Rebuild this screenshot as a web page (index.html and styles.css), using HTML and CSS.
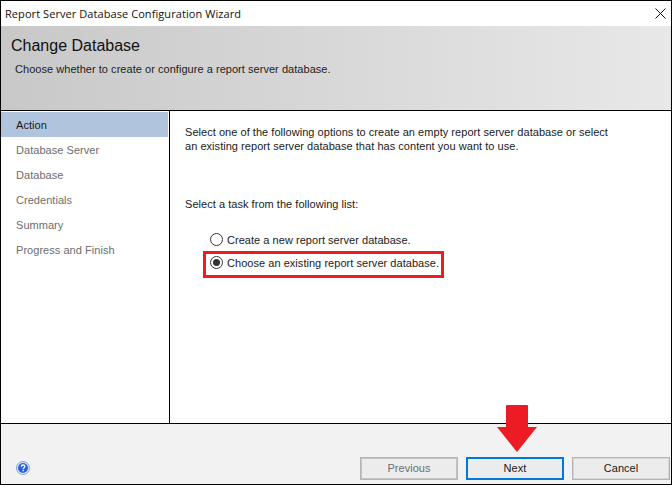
FILE: index.html
```html
<!DOCTYPE html>
<html lang="en">
<head>
<meta charset="utf-8">
<title>Report Server Database Configuration Wizard</title>
<link rel="stylesheet" href="styles.css">
</head>
<body>
<div class="window">
  <div class="titlebar">
    <span class="title">Report Server Database Configuration Wizard</span>
    <svg class="close" width="11" height="11" viewBox="0 0 11 11"><path d="M0.5 0.5L10.5 10.5M10.5 0.5L0.5 10.5" stroke="#111" stroke-width="1" fill="none"/></svg>
  </div>
  <header class="banner">
    <h1 class="banner-title">Change Database</h1>
    <p class="banner-sub">Choose whether to create or configure a report server database.</p>
  </header>
  <div class="middle">
    <nav class="steps">
      <div class="step active">Action</div>
      <div class="step">Database Server</div>
      <div class="step">Database</div>
      <div class="step">Credentials</div>
      <div class="step">Summary</div>
      <div class="step">Progress and Finish</div>
    </nav>
    <main class="content">
      <p class="intro">Select one of the following options to create an empty report server database or select<br>an existing report server database that has content you want to use.</p>
      <p class="prompt">Select a task from the following list:</p>
      <div class="options">
        <div class="option">
          <span class="radio"></span><span>Create a new report server database.</span>
        </div>
        <div class="option chosen">
          <span class="radio checked"></span><span>Choose an existing report server database.</span>
        </div>
      </div>
    </main>
  </div>
  <footer class="footer">
    <svg class="help" width="14" height="14" viewBox="0 0 14 14">
      <circle cx="7" cy="7" r="6.5" fill="#e3ebf8" stroke="#7fa3dc" stroke-width="1"/>
      <circle cx="7" cy="7" r="5" fill="#2a62d8"/>
      <path d="M5.2 5.6C5.3 4.5 6 4 7 4C8.1 4 8.9 4.6 8.9 5.5C8.9 6.6 7.2 6.8 7.2 8" stroke="#fff" stroke-width="1.3" fill="none"/>
      <rect x="6.5" y="8.8" width="1.4" height="1.4" fill="#fff"/>
    </svg>
    <div class="buttons">
      <button class="btn disabled" type="button">Previous</button>
      <button class="btn primary" type="button">Next</button>
      <button class="btn" type="button">Cancel</button>
    </div>
  </footer>
  <svg class="arrow" width="40" height="47" viewBox="0 0 40 47"><path d="M10 0H30Q31 0 31 1V22H40L20 47L0 22H9V1Q9 0 10 0Z" fill="#ed1c24"/></svg>
</div>
</body>
</html>
```
FILE: styles.css
```css
* { box-sizing: border-box; }
html, body { margin: 0; padding: 0; }
body {
  width: 672px;
  height: 485px;
  overflow: hidden;
  background: #fff;
  font-family: "Liberation Sans", Arial, sans-serif;
  font-size: 11px;
  letter-spacing: 0.04px;
  color: #1a1a1a;
}
.window {
  position: relative;
  width: 672px;
  height: 485px;
  border: 1px solid #000;
  display: flex;
  flex-direction: column;
}
.titlebar {
  height: 25px;
  flex: none;
  display: flex;
  align-items: center;
  justify-content: space-between;
  padding: 0 5px 0 4px;
  background: #fff;
}
.title { font-family: "Open Sans", sans-serif; font-size: 11px; letter-spacing: 0.07px; color: #111; }
.banner {
  height: 85px;
  flex: none;
  padding: 10px 10px 0;
  background: linear-gradient(to right, #c8c8c8, #e8e8e8);
  border-bottom: 1px solid #000;
}
.banner-title { margin: 0; font-size: 16px; font-weight: 400; letter-spacing: 0; line-height: 20px; color: #111; }
.banner-sub { margin: 6px 0 0 4px; line-height: 14px; color: #222; }
.middle { height: 312px; flex: none; display: flex; }
.steps {
  width: 169px;
  flex: none;
  padding: 1px 0 0;
  border-right: 1px solid #000;
}
.step {
  height: 25px;
  margin-right: 1px;
  padding: 1px 0 0 15px;
  line-height: 25px;
  color: #6d6d6d;
}
.step.active { background: #b0c4de; color: #1a1a1a; }
.content { flex: 1; padding: 14px 0 0 15px; }
.intro { margin: 0; line-height: 14px; }
.prompt { margin: 44px 0 0; line-height: 14px; }
.options { margin: 17px 0 0 18px; display: flex; flex-direction: column; }
.option {
  height: 23px;
  width: 241px;
  padding-left: 4px;
  display: flex;
  align-items: center;
  gap: 4px;
  border: 3px solid transparent;
  white-space: nowrap;
}
.option.chosen { height: 27px; padding-bottom: 4px; border-color: #ed1c24; }
.radio {
  width: 13px;
  height: 13px;
  border-radius: 50%;
  border: 1px solid #333;
  background: #fff;
  position: relative;
  flex: none;
}
.radio.checked::after {
  content: "";
  position: absolute;
  inset: 2px;
  border-radius: 50%;
  background: #333;
}
.footer {
  flex: 1;
  display: flex;
  align-items: flex-end;
  justify-content: space-between;
  padding: 0 1px 4px 15px;
  background: #f2f2f2;
  border-top: 1px solid #000;
}
.help { margin-bottom: 5px; }
.buttons { display: flex; gap: 8px; }
.btn {
  width: 98px;
  height: 23px;
  padding: 0 0 1px;
  font: 11px "Liberation Sans", Arial, sans-serif;
  letter-spacing: 0.04px;
  color: #1a1a1a;
  background: #ececec;
  border: 1px solid #b4b4b4;
  box-shadow: inset 0 0 0 1px #d6d6d6;
}
.btn.disabled { color: #6d6d6d; border-color: #b4b4b4; box-shadow: inset 0 0 0 1px #c4c4c4; }
.btn.primary { border: 2px solid #0078d7; box-shadow: none; }
.arrow { position: absolute; left: 496px; top: 404px; }
```
